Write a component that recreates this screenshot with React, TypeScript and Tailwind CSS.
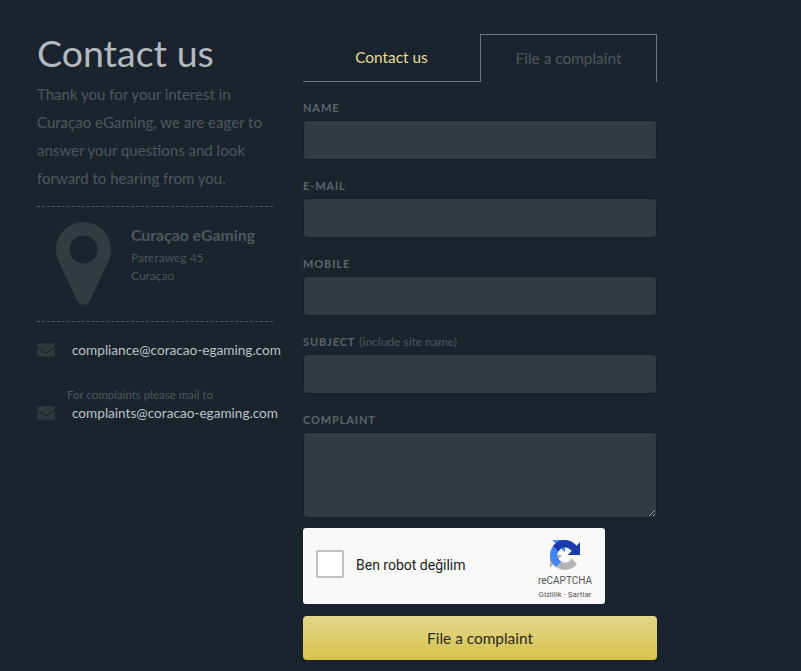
import { FaEnvelope } from 'react-icons/fa'

const fields = [
  { label: 'NAME' },
  { label: 'E-MAIL' },
  { label: 'MOBILE' },
  { label: 'SUBJECT', hint: '(include site name)' },
]

function FieldLabel({ label, hint }: { label: string; hint?: string }) {
  return (
    <div className="h-5 pb-[5px] flex items-center gap-1 text-[11px] leading-[14px]">
      <span className="font-bold tracking-[0.08em] text-[#5b646d]">{label}</span>
      {hint ? <span className="text-[12px] text-[#4d5660]">{hint}</span> : null}
    </div>
  )
}

function RecaptchaLogo() {
  const arrow = 'M64 32V5l-7.3 7.3C51 5 42 0 32 0 21.6 0 12.4 5 6.6 12.7L18 24.3c1.2-2.3 2.8-4.3 4.8-5.7 2-1.600 4.900-2.900 9.200-2.900.5 0 1 .1 1.200.2 5.400.4 10.100 3.400 12.900 7.800L37.900 32z'
  return (
    <svg viewBox="0 0 64 64" className="w-[30px] h-[30px]">
      <path d={arrow} fill="#b4b4b4" transform="rotate(-180 32 32)" />
      <path d={arrow} fill="#4285f4" transform="rotate(-90 32 32)" />
      <path d={arrow} fill="#1c3aa9" />
    </svg>
  )
}

export default function App() {
  return (
    <div className="min-h-[671px] h-[671px] overflow-hidden bg-[#1b242e] font-[Lato,sans-serif] flex pl-[37px]">
      <aside className="w-[236px] shrink-0 pt-[31px]">
        <h1 className="text-[37.500px] leading-[44px] text-[#b4b9bf]">Contact us</h1>
        <p className="mt-[5px] text-[15px] leading-[28px] text-[#4e5760]">
          Thank you for your interest in Curaçao eGaming, we are eager to answer your questions and look forward to hearing from you.
        </p>
        <div className="mt-[14px] border-t border-dashed border-[#515a63]" />
        <div className="flex h-[114px]">
          <svg viewBox="0 0 55 83" className="w-[55px] h-[83px] ml-[19px] mt-[15px] shrink-0">
            <path
              fillRule="evenodd"
              fill="#333c45"
              d="M27.5 0C12.3 0 0 12.3 0 27.5c0 4.8 1.2 8.7 3 12.6l17.6 37.6c3 6.8 10.800 6.800 13.800 0L52 40.100c1.800-3.900 3-7.800 3-12.600C55 12.300 42.700 0 27.500 0zM27.500 13.500a14 14 0 1 1 0 28 14 14 0 0 1 0-28z"
            />
          </svg>
          <div className="ml-[20px] pt-[18px]">
            <div className="text-[15.800px] leading-5 font-bold text-[#4e5760]">Curaçao eGaming</div>
            <div className="mt-[4px] text-[12px] leading-[18px] text-[#4a535c]">
              Pareraweg 45
              <br />
              Curaçao
            </div>
          </div>
        </div>
        <div className="border-t border-dashed border-[#515a63]" />
        <div className="mt-[18px] flex items-center h-5 text-[13.600px] text-[#bcc2c8] whitespace-nowrap">
          <FaEnvelope className="shrink-0 w-[18px] h-[18px] text-[#2f3841] mr-[17px]" />
          <span>compliance@coracao-egaming.com</span>
        </div>
        <div className="mt-[26px] pl-[30px] h-[16px] text-[11.500px] leading-[18px] text-[#4e5760] whitespace-nowrap">For complaints please mail to</div>
        <div className="flex items-center h-5 mt-px text-[13.600px] text-[#bcc2c8] whitespace-nowrap">
          <FaEnvelope className="shrink-0 w-[18px] h-[18px] text-[#2f3841] mr-[17px]" />
          <span>complaints@coracao-egaming.com</span>
        </div>
      </aside>

      <main className="w-[354px] ml-[30px] pt-[34px] shrink-0">
        <div className="flex h-[48px] text-[15.400px]">
          <button className="w-[177px] pt-px border-b border-[#6d7780] text-[#e6dc96]">Contact us</button>
          <button className="w-[177px] pt-px border border-b-0 border-[#6d7780] text-[#4e5760]">File a complaint</button>
        </div>
        <div className="mt-[18px]">
          {fields.map((field) => (
            <div key={field.label} className="h-[78px]">
              <FieldLabel label={field.label} hint={field.hint} />
              <input className="block w-full h-10 rounded-[4px] border border-[#161d25] bg-[#343b43] outline-none" />
            </div>
          ))}
          <FieldLabel label="COMPLAINT" />
          <textarea className="block w-full h-[86px] rounded-[4px] border border-[#161d25] bg-[#343b43] outline-none" />
        </div>
        <div className="mt-[10px] w-[302px] h-[76px] rounded-[3px] bg-[#f9f9f9] flex items-center font-[Roboto,sans-serif]">
          <div className="ml-[13px] -mt-[4px] w-[28px] h-[28px] rounded-[2px] border-2 border-[#c1c1c1] bg-white" />
          <span className="ml-[12px] -mt-[2px] text-[14px] text-[#222]">Ben robot değilim</span>
          <div className="ml-auto mr-[13px] w-[54px] flex flex-col items-center self-start pt-[12px]">
            <RecaptchaLogo />
            <div className="mt-[5px] text-[10px] leading-[12px] text-[#555]">reCAPTCHA</div>
            <div className="mt-[2px] text-[8px] leading-[12px] text-[#555] whitespace-nowrap">Gizlilik - Şartlar</div>
          </div>
        </div>
        <button className="mt-3 w-full h-[44px] pt-px rounded-[4px] bg-linear-to-b from-[#e3d88a] to-[#d6c247] text-[15.400px] text-[#2a2a22]">
          File a complaint
        </button>
      </main>
    </div>
  )
}
